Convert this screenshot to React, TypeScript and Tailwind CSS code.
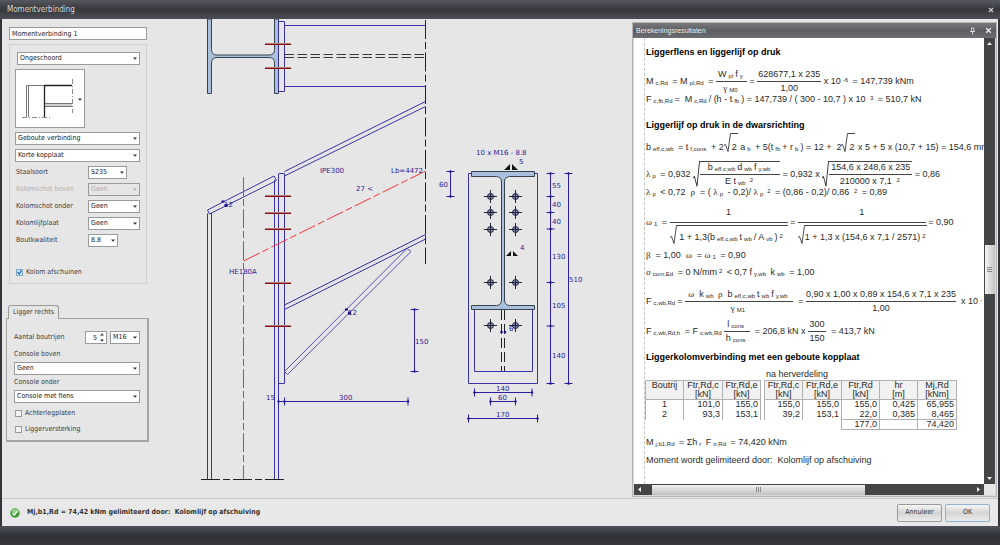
import type { ReactNode } from "react";

const fieldClass =
  "block w-full h-[13px] appearance-none border border-[#9a9a9a] bg-white pl-[2px] text-[7px] leading-none text-[#222] outline-none";

function Select({
  id,
  label,
  value,
  disabled,
  className = "",
}: {
  id: string;
  label?: string;
  value: string;
  disabled?: boolean;
  className?: string;
}) {
  return (
    <div className={`relative ${className}`}>
      <select
        id={id}
        aria-label={label}
        disabled={disabled}
        className={`${fieldClass} disabled:bg-[#e6e6e6] disabled:text-[#aaa]`}
      >
        <option>{value}</option>
      </select>
      <svg
        viewBox="0 0 4 3"
        className={`absolute right-[3px] top-[5px] w-[4px] h-[3px] pointer-events-none ${disabled ? "text-[#aaa]" : "text-[#333]"}`}
      >
        <path d="M0 0.5h4L2 2.7z" fill="currentColor" />
      </svg>
    </div>
  );
}

function Check({ label, checked }: { label: string; checked?: boolean }) {
  return (
    <label className="flex items-center gap-[3px] h-[9px]">
      <span className="relative w-[7px] h-[7px]">
        <input
          type="checkbox"
          defaultChecked={checked}
          className="peer block w-[7px] h-[7px] appearance-none border border-[#9a9a9a] bg-[#f4f4f4] checked:border-[#7fa8c9] checked:bg-[#d5e8f6]"
        />
        <svg
          viewBox="0 0 7 7"
          className="absolute inset-0 hidden peer-checked:block pointer-events-none"
        >
          <path
            d="M1.6 2.8L3.2 5l2.3-3.6"
            fill="none"
            stroke="#1f5fae"
            strokeWidth="1.2"
          />
        </svg>
      </span>
      {label}
    </label>
  );
}

const steelRows = [
  { id: "staal", label: "Staalsoort", value: "S235", width: "w-[39px]" },
  {
    id: "boven",
    label: "Kolomschot boven",
    value: "Geen",
    width: "w-[52px]",
    disabled: true,
  },
  { id: "onder", label: "Kolomschot onder", value: "Geen", width: "w-[52px]" },
  { id: "lijf", label: "Kolomlijfplaat", value: "Geen", width: "w-[52px]" },
  { id: "bout", label: "Boutkwaliteit", value: "8.8", width: "w-[30px]" },
];

function Settings() {
  return (
    <aside className="w-[148px] shrink-0 pt-2 pl-1 text-[7px] leading-none text-[#3c3c3c]">
      <div className="pl-[3px] pr-[3px]">
        <input
          aria-label="Naam"
          defaultValue="Momentverbinding 1"
          className={fieldClass}
        />
        <div className="mt-1 h-[240px] border border-[#cfcfcf] pt-[7px] pl-[5px] pr-[6px]">
          <div className="pl-[2px]">
            <Select id="schoor" label="Schoring" value="Ongeschoord" />
          </div>
          <button
            aria-label="Type verbinding"
            className="block mt-1 w-[70px] h-[59px] border border-[#9a9a9a] bg-white"
          >
            <svg viewBox="0 0 68 57" className="w-full h-full">
              <path
                d="M10.5 47V15.500H56M12.500 15v32M28.500 15v32M29 33.500h27M29 36.500h27"
                fill="none"
                stroke="#777"
              />
              <path d="M28.500 15v32M28 15.500h28" stroke="#222" strokeWidth="1.300" />
              <path d="M29 35h27" stroke="#ccc" strokeWidth="2" />
              <path
                d="M6 47.500h28M56.500 9v34"
                stroke="#888"
                strokeDasharray="5 2 1 2"
              />
              <path d="M62 28.500h4l-2 2.200z" fill="#333" />
            </svg>
          </button>
          <div className="mt-1 flex flex-col gap-1">
            <Select id="type" label="Verbinding" value="Geboute verbinding" />
            <Select id="plaat" label="Kopplaat" value="Korte kopplaat" />
          </div>
          <div className="mt-1 flex flex-col gap-1">
            {steelRows.map((row) => (
              <div key={row.id} className="flex items-center">
                <label
                  htmlFor={row.id}
                  className={`w-[73px] pl-px whitespace-nowrap ${row.disabled ? "text-[#b0b0b0]" : ""}`}
                >
                  {row.label}
                </label>
                <Select
                  id={row.id}
                  value={row.value}
                  disabled={row.disabled}
                  className={row.width}
                />
              </div>
            ))}
          </div>
          <div className="mt-[21px] pl-px">
            <Check label="Kolom afschuinen" checked />
          </div>
        </div>
      </div>

      <div className="mt-[21px]">
        <button className="block relative z-10 ml-[2px] -mb-px h-[14px] w-[51px] rounded-t-[3px] border border-b-0 border-[#9a9a9a] bg-[#e6e6e6]">
          Ligger rechts
        </button>
        <div className="h-[124px] w-[143px] border border-r-2 border-b-2 border-[#a4a4a4] pt-[12px] pl-[7px] pr-[7px]">
          <div className="flex items-center">
            <label htmlFor="rijen" className="w-[71px]">
              Aantal boutrijen
            </label>
            <div className="relative w-[22px] mr-[3px]">
              <input id="rijen" defaultValue="5" className={`${fieldClass} pl-[7px]`} />
              <svg
                viewBox="0 0 4 9"
                className="absolute right-[3px] top-[2px] w-[4px] h-[9px]"
              >
                <path d="M0 2.500h4L2 0.300zM0 6.500h4L2 8.700z" fill="#333" />
              </svg>
            </div>
            <Select id="maat" label="Boutmaat" value="M16" className="w-[30px]" />
          </div>
          <label htmlFor="cboven" className="block mt-[7px] mb-1">
            Console boven
          </label>
          <Select id="cboven" value="Geen" />
          <label htmlFor="conder" className="block mt-1 mb-1">
            Console onder
          </label>
          <Select id="conder" value="Console met flens" />
          <div className="mt-[6px] flex flex-col gap-[7px] pl-px">
            <Check label="Achterlegplaten" />
            <Check label="Liggerversterking" />
          </div>
        </div>
      </div>
    </aside>
  );
}

const columnBolts = [196, 213, 229, 283, 326];
const chain = [173.5, 196.5, 212.5, 229, 282.5, 326, 383.5];
const plateBolts = [196.5, 212.5, 229.5, 282.5, 325.5];

function HBolt({ y }: { y: number }) {
  return (
    <g>
      <path d={`M265 ${y - 0.5}h26`} stroke="#b0807a" />
      <path d={`M265 ${y + 0.5}h26`} stroke="#8e0c0c" />
    </g>
  );
}

// dimension line with a tick and a dot at every stop
function DimV({ x, stops }: { x: number; stops: number[] }) {
  return (
    <g stroke="#2a1fa0" fill="#1b0f90">
      <path d={`M${x} ${stops[0]}V${stops[stops.length - 1]}`} />
      {stops.map((y) => (
        <g key={y}>
          <path d={`M${x - 4} ${y}h8`} />
          <circle cx={x} cy={y} r="1.2" stroke="none" />
        </g>
      ))}
    </g>
  );
}

function DimH({ y, stops }: { y: number; stops: number[] }) {
  return (
    <g stroke="#2a1fa0" fill="#1b0f90">
      <path d={`M${stops[0]} ${y}H${stops[stops.length - 1]}`} />
      {stops.map((x) => (
        <g key={x}>
          <path d={`M${x} ${y - 4}v8`} />
          <circle cx={x} cy={y} r="1.2" stroke="none" />
        </g>
      ))}
    </g>
  );
}

const drawingTexts: [number, number, string][] = [
  [320, 173, "IPE300"],
  [391, 173, "Lb=4472"],
  [356, 191, "27 <"],
  [224, 207, "12"],
  [229, 274, "HE180A"],
  [348, 315, "12"],
  [415, 344, "150"],
  [266, 400, "15"],
  [339, 400, "300"],
  [439, 187, "60"],
  [476, 155, "10 x M16 - 8.8"],
  [519, 164, "5"],
  [520, 250, "4"],
  [509, 331, "6"],
  [552, 188, "55"],
  [552, 207, "40"],
  [552, 224, "40"],
  [552, 259, "130"],
  [569, 282, "510"],
  [552, 308, "105"],
  [552, 358, "140"],
  [496, 391, "140"],
  [498, 400, "60"],
  [496, 417, "170"],
];

function Drawing() {
  return (
    <svg
      viewBox="150 19 482 479"
      preserveAspectRatio="xMinYMin meet"
      className="flex-1 min-w-0 self-start"
      fill="none"
      strokeWidth="1"
    >
      {/* plan section */}
      <path
        d="M207.5 19V93.500H211.500V63Q211.500 57.500 217 57.500H269Q274.500 57.500 274.500 63V93.500H278.500V19H274.500V49.500Q274.500 55 269 55H217Q211.500 55 211.500 49.500V19Z"
        fill="#aabfdc"
        stroke="#37444f"
      />
      <g stroke="#3a32a8">
        <path d="M278.500 21.500H284.500V91.500H278.500ZM284.500 25.500H425.500M284.500 86.500H425.500" />
        <path d="M284.500 171.500L425.500 101.500M284.500 176L425.500 106.500" />
        <path d="M207.500 213.500V479M211.500 213V479M274.500 180V479M278.500 174V479" />
        <path d="M278.500 173.500H284.500V383.500H278.500" />
        <path d="M207.500 210L274 176L276.500 180.500L209.500 214Z" />
        <path d="M284.500 305L425.500 234.500V239L284.500 309.500" />
        <path d="M284.500 371.500L407 248.500L411 251.500L287.500 374.500Z" stroke="#5a52b4" />
      </g>
      <path
        d="M284.500 54.500H425M284.500 57.500H425"
        stroke="#3a3a3a"
        strokeDasharray="9.500 3.500"
      />
      <path
        d="M425.500 20V264"
        stroke="#222"
        strokeDasharray="19 3 7 3.500"
      />
      <path d="M201 479.500H285" stroke="#222" strokeDasharray="19 3 7 3" />
      <g stroke="#f83438">
        <path d="M243.500 177V479" strokeDasharray="19 3 7 3" />
        <path d="M243.500 261L425.500 171" strokeDasharray="18 3 7 3" />
      </g>
      {[44, 68, ...columnBolts].map((y) => (
        <HBolt key={y} y={y} />
      ))}
      <path
        d="M221.500 200.500h3v2h-3zM224.500 204h3v3h-3zM345 308.500h3v2h-3zM348 311.500h3v3h-3z"
        fill="#1b0f90"
      />

      {/* end plate view */}
      <path
        d="M468.500 173.500H537.500V383.500H468.500ZM474.500 309.500V371.500H532.500V309.500"
        stroke="#3a32a8"
      />
      <path
        d="M471.500 171.500H534.500V176.500H509.500Q504.500 177 504.500 182V300Q504.500 305 509.500 305.500H534.500V309.500H471.500V305.500H496.500Q501.500 305 501.500 300V182Q501.500 177 496.500 176.500H471.500Z"
        fill="#aabfdc"
        stroke="#37444f"
      />
      <path
        d="M501.500 310V371M504.500 310V371"
        stroke="#222"
        strokeDasharray="10 4"
      />
      {plateBolts.map((y) =>
        [490.5, 515.5].map((x) => (
          <g key={`${x}-${y}`} stroke="#26263a">
            <circle cx={x} cy={y} r="3" fill="#7f8bbb" />
            <path d={`M${x - 6.5} ${y}h13M${x} ${y - 6.5}v13`} />
          </g>
        )),
      )}
      <path
        d="M504 170h6v-6zM512 164v6h6zM506 256h5v-5zM513 251v5h5z"
        fill="#111"
      />
      <circle cx="501.500" cy="332" r="1.300" fill="#1b0f90" />
      <circle cx="505" cy="332" r="1.300" fill="#1b0f90" />

      <DimV x={450.5} stops={[171.5, 196.5]} />
      <DimV x={550.5} stops={chain} />
      <DimV x={568.5} stops={[173.5, 383.5]} />
      <DimV x={414.5} stops={[309.5, 371.5]} />
      <DimH y={401.5} stops={[278.5, 284.5, 408]} />
      <DimH y={392.5} stops={[474.5, 532]} />
      <DimH y={401.5} stops={[490.5, 515.5]} />
      <DimH y={418.5} stops={[468.5, 537.5]} />

      <g fill="#2c2299" className="text-[7px] font-['DejaVu_Sans',sans-serif]">
        {drawingTexts.map(([x, y, text]) => (
          <text key={`${x}-${y}`} x={x} y={y}>
            {text}
          </text>
        ))}
      </g>
    </svg>
  );
}

function Sub({ children }: { children: ReactNode }) {
  return (
    <sub className="mx-[2px] text-[6px] leading-none align-[-1px] bottom-0">
      {children}
    </sub>
  );
}

function Sup({ children }: { children: ReactNode }) {
  return (
    <sup className="mx-[2px] text-[6px] leading-none align-[2px] top-0">
      {children}
    </sup>
  );
}

function Greek({ children }: { children: ReactNode }) {
  return <span className="font-['Liberation_Serif',serif]">{children}</span>;
}

// both halves are equally high, so the bar stays on the axis of the row
function Frac({
  top,
  bottom,
  className = "",
}: {
  top: ReactNode;
  bottom: ReactNode;
  className?: string;
}) {
  return (
    <span className={`flex flex-col self-stretch text-center ${className}`}>
      <span className="flex-1 basis-0 flex items-end justify-center border-b border-[#444] pb-[2px]">
        <span>{top}</span>
      </span>
      <span className="flex-1 basis-0 flex items-start justify-center pt-[2px]">
        {bottom}
      </span>
    </span>
  );
}

function Root({
  children,
  className = "",
}: {
  children: ReactNode;
  className?: string;
}) {
  return (
    <span className={`flex ${className}`}>
      <svg
        viewBox="0 0 7 20"
        preserveAspectRatio="none"
        className="w-[7px] h-full shrink-0"
        fill="none"
        stroke="#333"
      >
        <path d="M0 13L1.500 12L4 19.500L6.500 0.500H7" strokeWidth="0.900" />
      </svg>
      <span className="flex-1 border-t border-[#444] flex flex-col justify-center">
        {children}
      </span>
    </span>
  );
}

function RootTwo() {
  return (
    <Root className="self-start h-[19px]">
      <span className="pt-[8px] px-px">2</span>
    </Root>
  );
}

function Row({
  className,
  children,
}: {
  className: string;
  children: ReactNode;
}) {
  return (
    <div className={`flex items-center whitespace-pre ${className}`}>
      {children}
    </div>
  );
}

const th = "border border-[#b0b0b0] bg-[#f1f1f1] font-normal p-0 h-[18px]";
const td = "border-l border-[#b0b0b0] p-0 pr-[2px] h-[10px] text-right";
const blank = "p-0";

function BoltTable() {
  return (
    <table className="-ml-px w-[311px] table-fixed border-collapse leading-[9px]">
      <colgroup>
        <col className="w-[38px]" />
        <col className="w-[39px]" />
        <col className="w-[38px]" />
        <col className="w-[4px]" />
        <col className="w-[38px]" />
        <col className="w-[39px]" />
        <col className="w-[38px]" />
        <col className="w-[38px]" />
        <col className="w-[39px]" />
      </colgroup>
      <thead>
        <tr>
          <th className={`${th} align-top`}>Boutrij</th>
          <th className={th}>Ftr,Rd,c<br />[kN]</th>
          <th className={th}>Ftr,Rd,e<br />[kN]</th>
          <td className={blank} />
          <th className={th}>Ftr,Rd,c<br />[kN]</th>
          <th className={th}>Ftr,Rd,e<br />[kN]</th>
          <th className={th}>Ftr,Rd<br />[kN]</th>
          <th className={th}>hr<br />[m]</th>
          <th className={th}>Mj,Rd<br />[kNm]</th>
        </tr>
      </thead>
      <tbody>
        <tr>
          <td className="border-l border-[#b0b0b0] p-0 text-center">1</td>
          <td className={td}>101,0</td>
          <td className={`${td} border-r`}>155,0</td>
          <td className={blank} />
          <td className={td}>155,0</td>
          <td className={td}>155,0</td>
          <td className={td}>155,0</td>
          <td className={td}>0,425</td>
          <td className={`${td} border-r`}>65,955</td>
        </tr>
        <tr>
          <td className="border-l border-[#b0b0b0] p-0 text-center">2</td>
          <td className={td}>93,3</td>
          <td className={`${td} border-r`}>153,1</td>
          <td className={blank} />
          <td className={td}>39,2</td>
          <td className={td}>153,1</td>
          <td className={td}>22,0</td>
          <td className={td}>0,385</td>
          <td className={`${td} border-r`}>8,465</td>
        </tr>
        <tr>
          <td className={blank} colSpan={6} />
          <td className={`${td} border`}>177,0</td>
          <td className={`${td} border`} />
          <td className={`${td} border`}>74,420</td>
        </tr>
      </tbody>
    </table>
  );
}

function Report() {
  return (
    <div className="flex-1 min-w-0 overflow-hidden bg-white pl-[10px] text-[9px] leading-[9px] text-[#2a2a2a] font-['Liberation_Sans',sans-serif]">
      <div className="h-full border-l border-dashed border-[#c4c4c4] pl-px pt-[6px]">
        <h2 className="h-[17px] leading-[17px] font-bold text-black">
          Liggerflens en liggerlijf op druk
        </h2>
        <Row className="mt-[6px] h-[28px]">
          <span>M<Sub>c,Rd</Sub> = M<Sub>pl,Rd</Sub> = </span>
          <Frac
            className="w-[31px]"
            top={<>W<Sub>pl</Sub>f<Sub>y</Sub></>}
            bottom={<span><Greek>γ</Greek><Sub>M0</Sub></span>}
          />
          <span>{" = "}</span>
          <Frac className="w-[64px]" top="628677,1 x 235" bottom="1,00" />
          <span>{" x 10"}<Sup>-6</Sup>{" = 147,739 kNm"}</span>
        </Row>
        <Row className="h-[9px]">
          <span>
            F<Sub>c,fb,Rd</Sub>{"=  M"}<Sub>c,Rd</Sub>/ (h - t<Sub>fb</Sub>) = 147,739 / ( 300 -
            {" 10,7 ) x 10 "}<Sup>3</Sup> = 510,7 kN
          </span>
        </Row>

        <h2 className="mt-[14px] h-[14px] leading-[14px] font-bold text-black">
          Liggerlijf op druk in de dwarsrichting
        </h2>
        <Row className="mt-px h-[28px]">
          <span>b<Sub>eff,c,wb</Sub> = t<Sub>f,cons</Sub> + 2</span>
          <RootTwo />
          <span> a<Sub>b</Sub> + 5(t<Sub>fb</Sub>+ r<Sub>b</Sub>) = 12 +  2</span>
          <RootTwo />
          <span>{" x 5 + 5 x (10,7 + 15) = 154,6 mm"}</span>
        </Row>
        <Row className="h-[26px]">
          <span><Greek>λ</Greek><Sub>p</Sub> = 0,932 </span>
          <Root className="h-full w-[87px]">
            <Frac
              className="flex-1"
              top={<>b<Sub>eff,c,wb</Sub>d<Sub>wb</Sub>f<Sub>y,wb</Sub></>}
              bottom={<span>E t<Sub>wb</Sub><Sup>2</Sup></span>}
            />
          </Root>
          <span>{" = 0,932 x "}</span>
          <Root className="h-full w-[90px]">
            <Frac
              className="flex-1"
              top="154,6 x 248,6 x 235"
              bottom={<span>210000 x 7,1 <Sup>2</Sup></span>}
            />
          </Root>
          <span>{" = 0,86"}</span>
        </Row>
        <Row className="mt-px h-[9px]">
          <span>
            <Greek>λ</Greek><Sub>p</Sub> {"< 0,72  "}<Greek>ρ</Greek>{"  = ( "}
            <Greek>λ</Greek><Sub>p</Sub> - 0,2)/ <Greek>λ</Greek><Sub>p</Sub>
            <Sup>2</Sup>{" = (0,86 - 0,2)/ 0,86 "}<Sup>2</Sup> = 0,89
          </span>
        </Row>
        <Row className="mt-[2px] h-[46px]">
          <span><Greek>ω</Greek><Sub>1</Sub> = </span>
          <Frac
            className="w-[118px]"
            top={<span className="block pb-[3px]">1</span>}
            bottom={
              <Root className="h-[19px] w-full">
                <span className="pt-[6px]">
                  {"1 + 1,3(b"}<Sub>eff,c,wb</Sub>t<Sub>wb</Sub>/ A<Sub>vb</Sub>)<Sup>2</Sup>
                </span>
              </Root>
            }
          />
          <span>{" = "}</span>
          <Frac
            className="w-[128px]"
            top={<span className="block pb-[3px]">1</span>}
            bottom={
              <Root className="h-[19px] w-full">
                <span className="pt-[6px]">
                  {"1 + 1,3 x (154,6 x 7,1 / 2571)"}<Sup>2</Sup>
                </span>
              </Root>
            }
          />
          <span>{" = 0,90"}</span>
        </Row>
        <Row className="mt-[3px] h-[14px]">
          <span>
            <Greek>β</Greek>{"  = 1,00  "}<Greek>ω</Greek>{"  = "}
            <Greek>ω</Greek><Sub>1</Sub>{" = 0,90"}
          </span>
        </Row>
        <Row className="mt-[3px] h-[14px]">
          <span>
            <Greek>σ</Greek><Sub>com,Ed</Sub> = 0 N/mm<Sup>2</Sup> {"< 0,7 f"}
            <Sub>y,wb</Sub> k<Sub>wb</Sub> = 1,00
          </span>
        </Row>
        <Row className="mt-[8px] h-[28px]">
          <span>F<Sub>c,wb,Rd</Sub>= </span>
          <Frac
            className="w-[110px]"
            top={
              <>
                <Greek>ω</Greek>{"  k"}<Sub>wb</Sub> <Greek>ρ</Greek>{"  b"}
                <Sub>eff,c,wb</Sub>t<Sub>wb</Sub>f<Sub>y,wb</Sub>
              </>
            }
            bottom={<span><Greek>γ</Greek><Sub>M1</Sub></span>}
          />
          <span>{"  = "}</span>
          <Frac
            className="w-[151px]"
            top="0,90 x 1,00 x 0,89 x 154,6 x 7,1 x 235"
            bottom="1,00"
          />
          <span>{"  x 10"}<Sup>-</Sup></span>
        </Row>
        <Row className="mt-px h-[30px]">
          <span>F<Sub>c,wb,Rd,h</Sub> = F<Sub>c,wb,Rd</Sub></span>
          <Frac
            className="w-[26px]"
            top={<>l<Sub>cons</Sub></>}
            bottom={<span>h<Sub>cons</Sub></span>}
          />
          <span>{"  = 206,8 kN x "}</span>
          <Frac className="w-[18px]" top="300" bottom="150" />
          <span>{"  = 413,7 kN"}</span>
        </Row>

        <h2 className="mt-1 h-[14px] leading-[14px] font-bold text-black">
          Liggerkolomverbinding met een geboute kopplaat
        </h2>
        <p className="mt-1 h-[12px] leading-[12px] pl-[120px]">na herverdeling</p>
        <BoltTable />
        <Row className="mt-[5px] h-[14px]">
          <span>
            M<Sub>j,b1,Rd</Sub> = Σh<Sub>r</Sub> F<Sub>tr,Rd</Sub> = 74,420 kNm
          </span>
        </Row>
        <p className="mt-1 h-[14px] leading-[14px] whitespace-pre">
          {"Moment wordt gelimiteerd door:  Kolomlijf op afschuiving"}
        </p>
      </div>
    </div>
  );
}

function Results() {
  return (
    <section className="w-[365px] shrink-0 mt-[3px] mb-[1px] mr-[1px] flex flex-col border border-[#b4b4b4] bg-[#d8d8d8]">
      <header className="flex items-center h-[15px] pl-[3px] pr-[4px] bg-linear-to-b from-[#77797c] via-[#5c5e62] to-[#6c6e71] text-[7px] leading-none text-[#eee] font-['Liberation_Sans',sans-serif]">
        <h1 className="flex-1">Berekeningsresultaten</h1>
        <button aria-label="Vastzetten" className="mr-[9px]">
          <svg viewBox="0 0 7 8" className="w-[7px] h-[8px]" fill="none" stroke="#ddd">
            <path d="M2.500 1h2.500v3.500h-2.500zM1 4.500h5M3.500 4.500v3" strokeWidth="0.900" />
          </svg>
        </button>
        <button aria-label="Sluiten">
          <svg viewBox="0 0 7 7" className="w-[7px] h-[7px]" stroke="#eee">
            <path d="M1.200 1.200l4.600 4.600M5.800 1.200L1.200 5.800" strokeWidth="1.300" />
          </svg>
        </button>
      </header>
      <div className="flex flex-1 pl-px pr-px">
        <Report />
        <div className="w-[11px] flex flex-col items-center bg-[#444546]">
          <svg viewBox="0 0 11 11" className="w-[11px] h-[11px]">
            <path d="M3 7h5L5.500 4z" fill="#eee" />
          </svg>
          <div className="mt-[196px] w-[10px] h-[49px] bg-linear-to-r from-[#f4f4f4] to-[#c4c4c4] flex flex-col items-center justify-center gap-px">
            <span className="w-[5px] h-px bg-[#888]" />
            <span className="w-[5px] h-px bg-[#888]" />
            <span className="w-[5px] h-px bg-[#888]" />
          </div>
          <svg viewBox="0 0 11 11" className="mt-auto w-[11px] h-[11px]">
            <path d="M3 4h5L5.500 7z" fill="#eee" />
          </svg>
        </div>
      </div>
      <div className="flex h-[11px] mx-px mb-px">
        <div className="flex-1 flex items-center bg-[#444546]">
          <svg viewBox="0 0 11 11" className="w-[11px] h-[11px]">
            <path d="M7 3v5L4 5.500z" fill="#eee" />
          </svg>
          <div className="ml-[7px] w-[213px] h-[10px] bg-linear-to-b from-[#efefef] to-[#c2c2c2] flex items-center justify-center gap-px">
            <span className="w-px h-[5px] bg-[#888]" />
            <span className="w-px h-[5px] bg-[#888]" />
            <span className="w-px h-[5px] bg-[#888]" />
          </div>
          <svg viewBox="0 0 11 11" className="ml-auto w-[11px] h-[11px]">
            <path d="M4 3v5l3-2.500z" fill="#eee" />
          </svg>
        </div>
        <div className="w-[11px] bg-[#e6e6e6]" />
      </div>
    </section>
  );
}

const btn =
  "w-[45px] h-[18px] rounded-[2px] border bg-linear-to-b from-[#f6f6f6] via-[#d4d4d6] to-[#ececec] text-[#333]";

export default function App() {
  return (
    <div className="min-h-screen flex flex-col bg-[#33353a] text-[7px] leading-none font-['DejaVu_Sans_Condensed','DejaVu_Sans',sans-serif]">
      <header className="flex items-center h-[19px] pl-[7px] pr-[6px] bg-linear-to-b from-[#55585f] via-[#36383d] to-[#4b4e55] text-[#d8d8d8]">
        <h1 className="flex-1 text-[8px]">Momentverbinding</h1>
        <button aria-label="Venster sluiten">
          <svg viewBox="0 0 6 6" className="w-[6px] h-[6px]" stroke="#ccc">
            <path d="M1 1l4 4M5 1L1 5" strokeWidth="1.200" />
          </svg>
        </button>
      </header>
      <main className="flex-1 mx-[2px] flex bg-[#e6e6e6] border-b border-[#c8c8c8]">
        <Settings />
        <Drawing />
        <Results />
      </main>
      <footer className="mx-[2px] flex items-center gap-[3px] h-[27px] bg-[#e8e8e8] pl-2 pr-2">
        <svg viewBox="0 0 10 10" className="w-[10px] h-[10px]">
          <circle cx="5" cy="5" r="4.700" fill="#3f9a35" />
          <ellipse cx="5" cy="3" rx="3.500" ry="2.200" fill="#8fce86" />
          <path d="M2.500 5.200L4.300 7L7.500 3.200" fill="none" stroke="#fff" strokeWidth="1.300" />
        </svg>
        <p className="flex-1 pl-[4px] font-bold text-[#333] whitespace-pre">
          {"Mj,b1,Rd = 74,42 kNm gelimiteerd door:  Kolomlijf op afschuiving"}
        </p>
        <button className={`${btn} border-[#9a9a9a]`}>Annuleer</button>
        <button className={`${btn} border-[#8fb4cf]`}>OK</button>
      </footer>
      <div className="h-[20px] bg-linear-to-b from-[#4e5158] via-[#303237] to-[#36383d]" />
    </div>
  );
}
